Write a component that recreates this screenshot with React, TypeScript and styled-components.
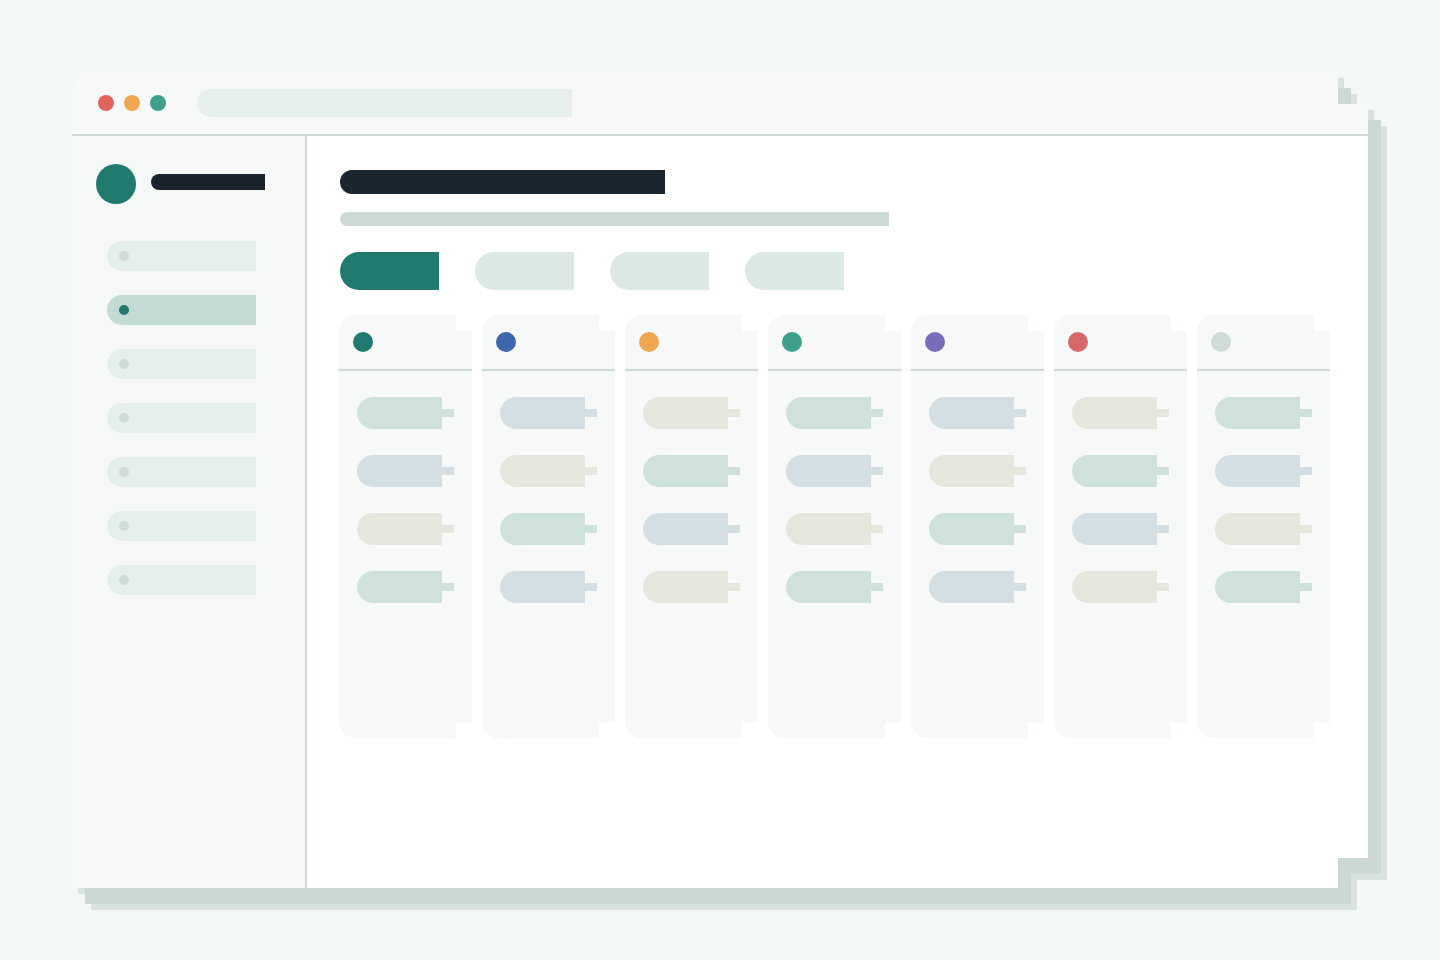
import styled, { createGlobalStyle } from "styled-components";

const GlobalStyle = createGlobalStyle`
  html, body {
    margin: 0;
    padding: 0;
    background: #f3f8f5;
    font-family: "Inter", "Liberation Sans", sans-serif;
  }
`;

const ACCENTS = ["#217a6f", "#3e67ad", "#f0a550", "#3f9e8c", "#7a6cb8", "#d4686a", "#cfdcd6"];
const CARD_TONES = ["#cfe1dc", "#d3dfe3", "#e7e6dc"];
const NAV_COUNT = 7;
const ACTIVE_NAV = 1;
const CARDS_PER_COLUMN = 4;

const Page = styled.div`
  width: 1440px;
  height: 960px;
  padding: 72px;
  box-sizing: border-box;
`;

// flat, stepped shadow under the window
const Frame = styled.div`
  width: 1296px;
  height: 816px;
  filter: drop-shadow(13px 16px 0 #ccd9d3) drop-shadow(6px 6px 0 #d9e3de);
`;

const Window = styled.div`
  width: 100%;
  height: 100%;
  display: flex;
  flex-direction: column;
  background: #ffffff;
  border-radius: 24px 0 0 0;
  overflow: hidden;
  clip-path: polygon(
    0 0,
    calc(100% - 30px) 0,
    calc(100% - 30px) 32px,
    100% 32px,
    100% calc(100% - 30px),
    calc(100% - 30px) calc(100% - 30px),
    calc(100% - 30px) 100%,
    0 100%
  );
`;

const TitleBar = styled.div`
  height: 62px;
  flex-shrink: 0;
  display: flex;
  align-items: center;
  padding-left: 26px;
  background: #f7f9f8;
  border-bottom: 2px solid #cdd9d4;
`;

const Lights = styled.div`
  display: flex;
  gap: 10px;
`;

const Light = styled.span<{ $color: string }>`
  width: 16px;
  height: 16px;
  border-radius: 50%;
  background: ${(p) => p.$color};
`;

const AddressBar = styled.div`
  width: 375px;
  height: 28px;
  margin-left: 31px;
  border-radius: 14px 0 0 14px;
  background: #e6efeb;
`;

const Body = styled.div`
  flex: 1;
  display: flex;
  min-height: 0;
`;

const Sidebar = styled.aside`
  width: 235px;
  flex-shrink: 0;
  padding: 28px 0 0 24px;
  box-sizing: border-box;
  background: #f5f8f7;
  border-right: 2px solid #cdd9d4;
`;

const Brand = styled.div`
  display: flex;
  align-items: center;
  gap: 15px;
`;

const Avatar = styled.span`
  width: 40px;
  height: 40px;
  border-radius: 50%;
  background: #217a6f;
`;

const BrandName = styled.span`
  width: 114px;
  height: 16px;
  margin-top: -4px;
  border-radius: 8px 0 0 8px;
  background: #1a232d;
`;

const NavList = styled.nav`
  display: flex;
  flex-direction: column;
  gap: 24px;
  margin-top: 37px;
  padding-left: 11px;
`;

const NavItem = styled.div<{ $active?: boolean }>`
  width: 149px;
  height: 30px;
  display: flex;
  align-items: center;
  padding-left: 12px;
  box-sizing: border-box;
  border-radius: 15px 0 0 15px;
  background: ${(p) => (p.$active ? "#c4dbd5" : "#e4eeea")};
`;

const NavDot = styled.span<{ $active?: boolean }>`
  width: 10px;
  height: 10px;
  border-radius: 50%;
  background: ${(p) => (p.$active ? "#217a6f" : "#cfdcd6")};
`;

const Main = styled.main`
  flex: 1;
  padding: 34px 0 0 33px;
  display: flex;
  flex-direction: column;
  align-items: flex-start;
`;

const Heading = styled.div`
  width: 325px;
  height: 24px;
  border-radius: 12px 0 0 12px;
  background: #1b2530;
`;

const Subheading = styled.div`
  width: 549px;
  height: 14px;
  margin-top: 18px;
  border-radius: 7px 0 0 7px;
  background: #cddad4;
`;

const Tabs = styled.div`
  display: flex;
  gap: 36px;
  margin-top: 26px;
`;

const Tab = styled.div<{ $active?: boolean }>`
  width: 99px;
  height: 38px;
  border-radius: 19px 0 0 19px;
  background: ${(p) => (p.$active ? "#217a6f" : "#dce8e2")};
`;

const Board = styled.div`
  display: grid;
  grid-template-columns: repeat(7, 133px);
  gap: 10px;
  margin-top: 25px;
  margin-left: -1px;
`;

const Column = styled.section`
  height: 423px;
  display: flex;
  flex-direction: column;
  background: #f7f9f8;
  border-radius: 16px 0 0 16px;
  clip-path: polygon(
    0 0,
    calc(100% - 16px) 0,
    calc(100% - 16px) 16px,
    100% 16px,
    100% calc(100% - 16px),
    calc(100% - 16px) calc(100% - 16px),
    calc(100% - 16px) 100%,
    0 100%
  );
`;

const ColumnHead = styled.header`
  height: 54px;
  display: flex;
  align-items: center;
  padding-left: 14px;
  border-bottom: 2px solid #cddad4;
`;

const ColumnDot = styled.span<{ $color: string }>`
  width: 20px;
  height: 20px;
  border-radius: 50%;
  background: ${(p) => p.$color};
`;

const CardList = styled.div`
  display: flex;
  flex-direction: column;
  gap: 26px;
  padding: 26px 0 0 18px;
`;

const Card = styled.div`
  display: flex;
  align-items: center;
`;

const CardBody = styled.span<{ $tone: string }>`
  width: 85px;
  height: 32px;
  border-radius: 16px 0 0 16px;
  background: ${(p) => p.$tone};
`;

const CardTag = styled.span<{ $tone: string }>`
  width: 12px;
  height: 8px;
  background: ${(p) => p.$tone};
`;

function App() {
  return (
    <>
      <GlobalStyle />
      <Page>
        <Frame>
          <Window>
            <TitleBar>
              <Lights>
                <Light $color="#e0645c" />
                <Light $color="#f0a550" />
                <Light $color="#3f9e8c" />
              </Lights>
              <AddressBar />
            </TitleBar>

            <Body>
              <Sidebar>
                <Brand>
                  <Avatar />
                  <BrandName />
                </Brand>
                <NavList>
                  {Array.from({ length: NAV_COUNT }, (_, i) => (
                    <NavItem key={i} $active={i === ACTIVE_NAV}>
                      <NavDot $active={i === ACTIVE_NAV} />
                    </NavItem>
                  ))}
                </NavList>
              </Sidebar>

              <Main>
                <Heading />
                <Subheading />
                <Tabs>
                  <Tab $active />
                  <Tab />
                  <Tab />
                  <Tab />
                </Tabs>

                <Board>
                  {ACCENTS.map((accent, col) => (
                    <Column key={col}>
                      <ColumnHead>
                        <ColumnDot $color={accent} />
                      </ColumnHead>
                      <CardList>
                        {Array.from({ length: CARDS_PER_COLUMN }, (_, row) => {
                          const tone = CARD_TONES[(col + row) % CARD_TONES.length];
                          return (
                            <Card key={row}>
                              <CardBody $tone={tone} />
                              <CardTag $tone={tone} />
                            </Card>
                          );
                        })}
                      </CardList>
                    </Column>
                  ))}
                </Board>
              </Main>
            </Body>
          </Window>
        </Frame>
      </Page>
    </>
  );
}

export default App;
